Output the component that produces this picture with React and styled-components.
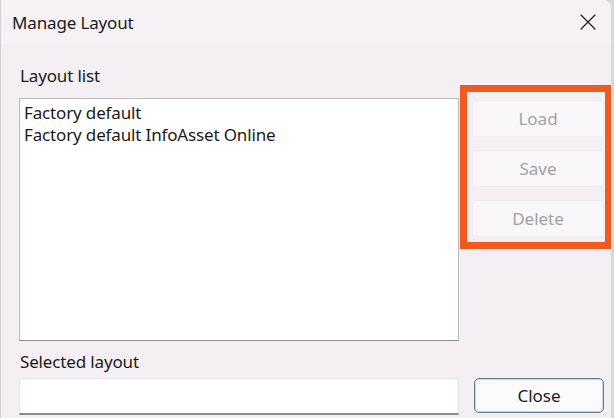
import React from "react";
import styled, { createGlobalStyle } from "styled-components";
import { X } from "lucide-react";

const Global = createGlobalStyle`
  html, body { margin: 0; padding: 0; background: #d9d7d9; }
  body { width: 614px; height: 418px; overflow: hidden; }
  * { box-sizing: border-box; }
`;

const Window = styled.div`
  width: 611px;
  height: 418px;
  background: #f3eff3;
  border-top-right-radius: 8px;
  border-left: 1px solid #d2ced2;
  display: flex;
  flex-direction: column;
  font-family: "Noto Sans", "Open Sans", sans-serif;
  font-size: 17px;
  color: #1a1a1a;
  overflow: hidden;
`;

const TitleBar = styled.div`
  height: 44px;
  display: flex;
  align-items: center;
  justify-content: space-between;
  padding: 0 9px 0 11px;
  background: #f5f1f5;
`;

const Title = styled.span`
  font-size: 17px;
  letter-spacing: -0.15px;
`;

const CloseX = styled.button`
  border: none;
  background: transparent;
  padding: 0;
  display: flex;
  color: #2a2a2a;
`;

const Body = styled.div`
  flex: 1;
  display: grid;
  grid-template-columns: 440px 1fr;
  column-gap: 1px;
  padding: 0 0 0 18px;
`;

const LeftCol = styled.div`
  display: flex;
  flex-direction: column;
`;

const Label = styled.div`
  height: 22px;
  line-height: 22px;
  margin-top: ${(p) => p.$top}px;
  padding-left: 1px;
  letter-spacing: -0.15px;
`;

const ListBox = styled.div`
  margin-top: 11px;
  height: 243px;
  background: #ffffff;
  border: 1px solid #bdb9bd;
  border-bottom-color: #8f8c8f;
  padding: 3px 0 0 4px;
  display: flex;
  flex-direction: column;
`;

const ListItem = styled.div`
  height: 22px;
  line-height: 22px;
  letter-spacing: -0.15px;
`;

const TextInput = styled.div`
  margin-top: 5px;
  height: 37px;
  background: #ffffff;
  border: 1px solid #e6e2e6;
  border-bottom: 2px solid #8c898c;
`;

const RightCol = styled.div`
  display: flex;
  flex-direction: column;
  justify-content: space-between;
`;

const Highlight = styled.div`
  margin-top: 41px;
  width: 152px;
  height: 164px;
  border: 7px solid #f05a1c;
  padding: 8px 1px 0 5px;
  display: flex;
  flex-direction: column;
  gap: 13px;
`;

const ActionButton = styled.button`
  height: 37px;
  width: 132px;
  border: 1px solid #efebef;
  border-radius: 3px;
  background: #faf7fa;
  color: #a3a0a3;
  font-family: inherit;
  font-size: 17px;
  padding: 0;
`;

const PrimaryButton = styled.button`
  margin: 0 0 5px 14px;
  height: 35px;
  width: 130px;
  border: 1px solid #5f7d99;
  box-shadow: inset 0 0 0 1px #c9d6e2;
  border-radius: 5px;
  background: #fcfbfc;
  color: #1a1a1a;
  font-family: inherit;
  font-size: 17px;
  padding: 0;
`;

export default function App() {
  return (
    <>
      <Global />
      <Window>
        <TitleBar>
          <Title>Manage Layout</Title>
          <CloseX aria-label="Close">
            <X size={28} strokeWidth={1.15} />
          </CloseX>
        </TitleBar>
        <Body>
          <LeftCol>
            <Label $top={21}>Layout list</Label>
            <ListBox>
              <ListItem>Factory default</ListItem>
              <ListItem>Factory default InfoAsset Online</ListItem>
            </ListBox>
            <Label $top={10}>Selected layout</Label>
            <TextInput />
          </LeftCol>
          <RightCol>
            <Highlight>
              <ActionButton disabled>Load</ActionButton>
              <ActionButton disabled>Save</ActionButton>
              <ActionButton disabled>Delete</ActionButton>
            </Highlight>
            <PrimaryButton>Close</PrimaryButton>
          </RightCol>
        </Body>
      </Window>
    </>
  );
}
